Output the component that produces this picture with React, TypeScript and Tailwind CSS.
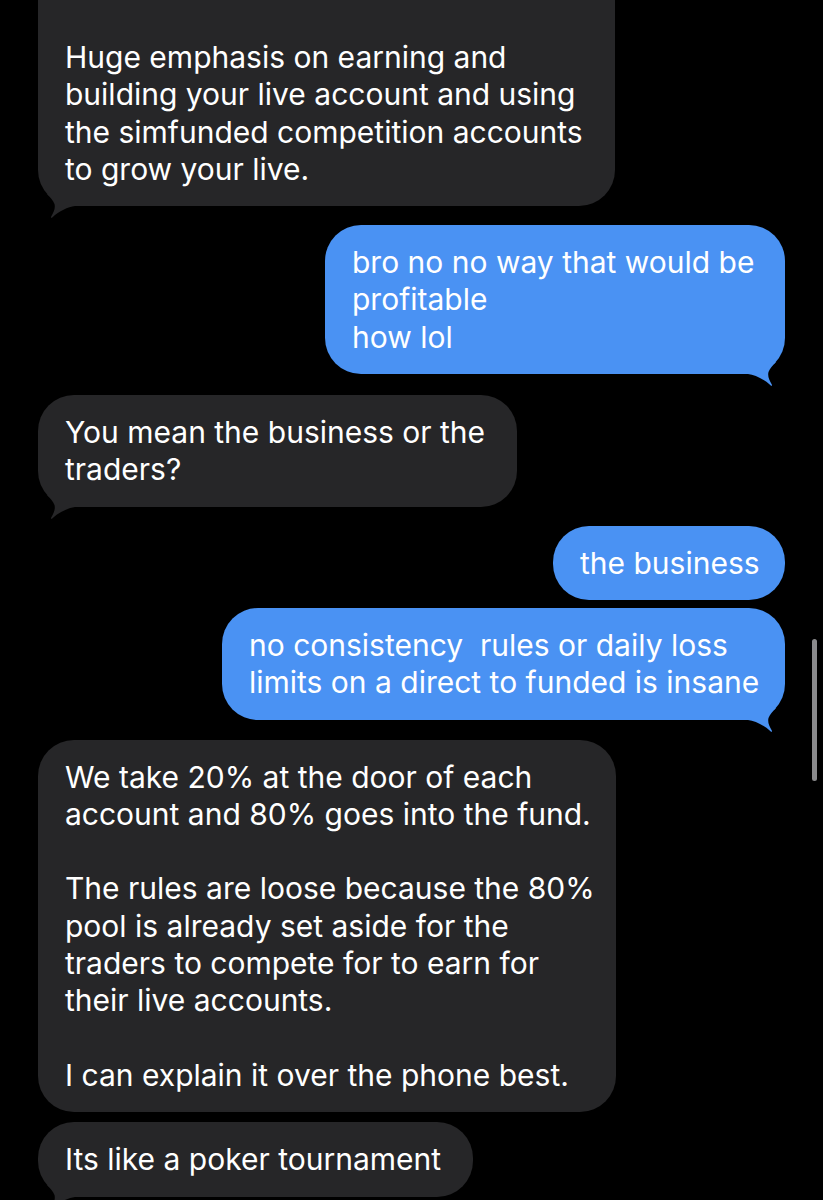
import React from "react";

type Msg = {
  id: string;
  from: "me" | "them";
  lines: string[];
  width: number;
  mt: string;
  tail: boolean;
  first?: boolean;
};

const MESSAGES: Msg[] = [
  {
    id: "m1",
    from: "them",
    lines: [
      "Huge emphasis on earning and",
      "building your live account and using",
      "the simfunded competition accounts",
      "to grow your live.",
    ],
    width: 577,
    mt: "mt-0",
    tail: true,
    first: true,
  },
  {
    id: "m2",
    from: "me",
    lines: ["bro no no way that would be", "profitable", "how lol"],
    width: 460,
    mt: "mt-[19px]",
    tail: true,
  },
  {
    id: "m3",
    from: "them",
    lines: ["You mean the business or the", "traders?"],
    width: 479,
    mt: "mt-[21px]",
    tail: true,
  },
  {
    id: "m4",
    from: "me",
    lines: ["the business"],
    width: 232,
    mt: "mt-[19px]",
    tail: false,
  },
  {
    id: "m5",
    from: "me",
    lines: ["no consistency  rules or daily loss", "limits on a direct to funded is insane"],
    width: 563,
    mt: "mt-[8px]",
    tail: true,
  },
  {
    id: "m6",
    from: "them",
    lines: [
      "We take 20% at the door of each",
      "account and 80% goes into the fund.",
      "",
      "The rules are loose because the 80%",
      "pool is already set aside for the",
      "traders to compete for to earn for",
      "their live accounts.",
      "",
      "I can explain it over the phone best.",
    ],
    width: 578,
    mt: "mt-[20px]",
    tail: false,
  },
  {
    id: "m7",
    from: "them",
    lines: ["Its like a poker tournament"],
    width: 435,
    mt: "mt-[10px]",
    tail: true,
  },
];

// iOS style bubble tail, drawn for the right side; mirrored for incoming
function Tail({ color, side }: { color: string; side: "left" | "right" }) {
  return (
    <svg
      width="40"
      height="24"
      viewBox="0 0 40 24"
      className={`absolute bottom-[-12px] ${side === "right" ? "right-0" : "left-0 -scale-x-100"}`}
    >
      <path
        d="M3 12 C10 13, 19 17, 25.5 23.2 C26.5 24.2, 27.5 23.6, 26.8 22.4 C24 18, 22.5 14, 23.5 10 C25 6, 28 3, 31 0 L0 0 L0 12 Z"
        fill={color}
      />
    </svg>
  );
}

function Bubble({ msg }: { msg: Msg }) {
  const mine = msg.from === "me";
  const color = mine ? "#4a92f3" : "#262628";
  return (
    <div
      className={`relative ${msg.mt} ${mine ? "self-end bg-[#4a92f3]" : "self-start bg-[#262628]"} ${
        msg.first ? "rounded-b-[36px] pt-[39px]" : "rounded-[36px] pt-[19px]"
      } pb-[18px] px-[27px] text-white`}
      style={{ width: msg.width }}
    >
      {msg.lines.map((line, i) => (
        <div key={i} className="whitespace-pre h-[37.3px]">
          {line === "" ? "\u00a0" : line}
        </div>
      ))}
      {msg.tail && <Tail color={color} side={mine ? "right" : "left"} />}
    </div>
  );
}

export default function App() {
  return (
    <div className="relative w-full h-[1200px] overflow-hidden bg-black font-['Inter','Noto_Sans',sans-serif] text-[30px] leading-[37.3px]">
      <div className="flex flex-col px-[38px]">
        {MESSAGES.map((m) => (
          <Bubble key={m.id} msg={m} />
        ))}
      </div>

      {/* scroll indicator */}
      <div className="absolute left-[812px] top-[639px] w-[5px] h-[142px] rounded-full bg-[#8b8b8d]" />
    </div>
  );
}
